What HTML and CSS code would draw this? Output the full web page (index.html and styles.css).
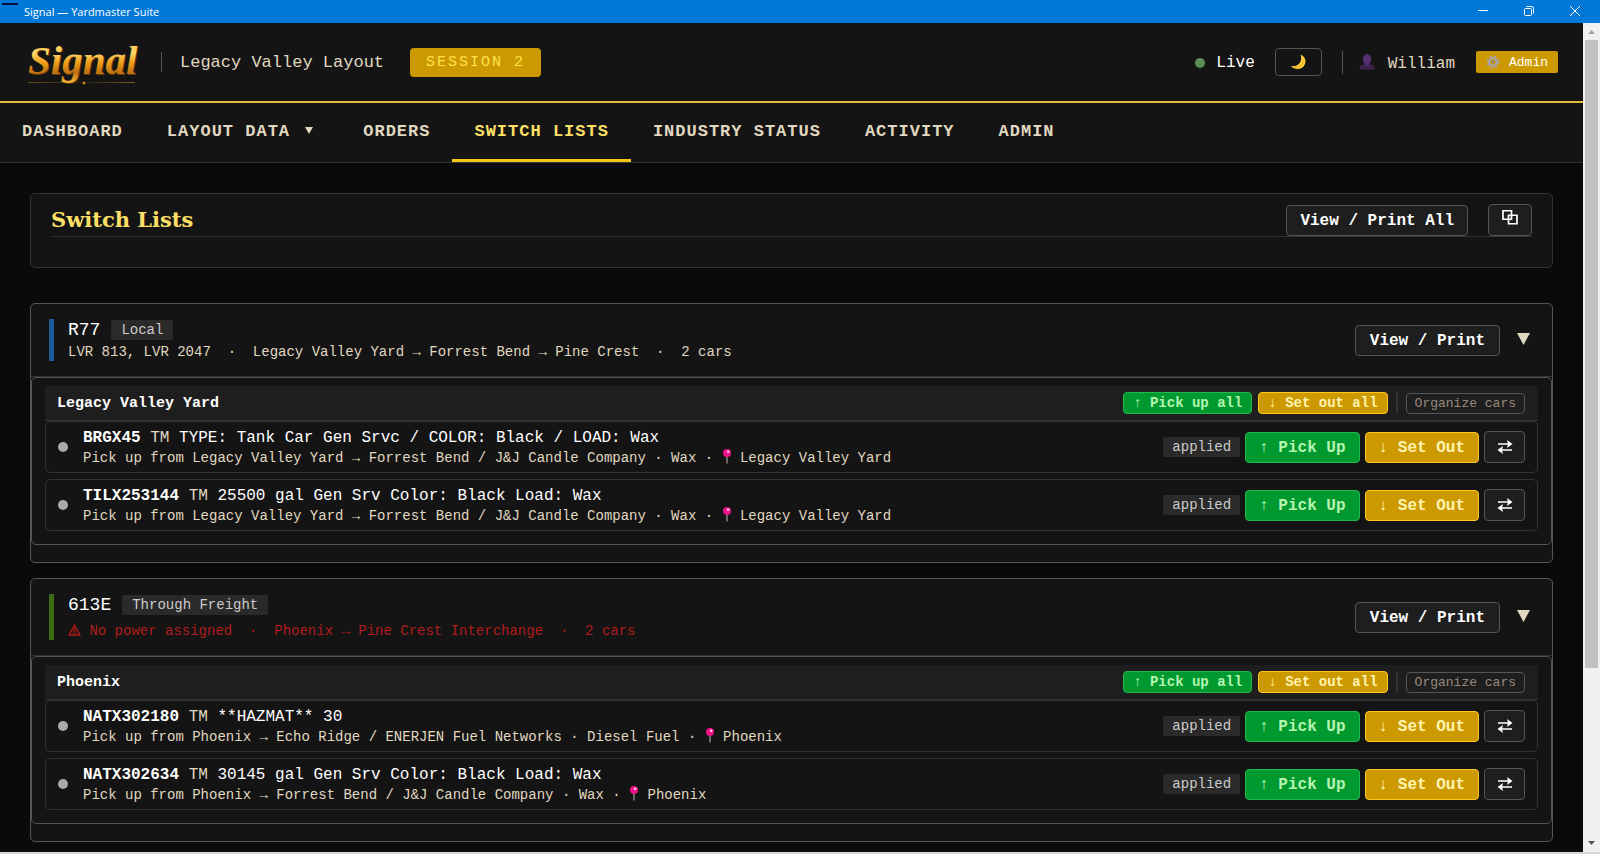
FILE: index.html
```html
<!DOCTYPE html>
<html lang="en">
<head>
<meta charset="utf-8">
<meta name="viewport" content="width=device-width, initial-scale=1">
<title>Signal — Yardmaster Suite</title>
<link rel="stylesheet" href="styles.css">
</head>
<body>
<svg class="sprite" aria-hidden="true">
  <symbol id="pin" viewBox="0 0 10 15">
    <path d="M4.500 6.500h1V14.500h-1z" fill="#b9b9b9"/>
    <circle cx="5" cy="4" r="4" fill="#ee1289"/>
    <circle cx="6.200" cy="2.800" r="1.300" fill="#ffd0e8"/>
  </symbol>
  <symbol id="swap" viewBox="0 0 16 14">
    <path d="M1 4h12M3 10h12" stroke="currentColor" stroke-width="1.600" fill="none"/>
    <path d="M10 0 15.500 4 10 8l1-4zM6 6 .5 10 6 14l-1-4z" fill="currentColor"/>
  </symbol>
</svg>

<div class="window">
  <div class="titlebar">
    <span class="titlebar-mark"></span>
    <span class="titlebar-name">Signal — Yardmaster Suite</span>
    <div class="titlebar-controls">
      <button type="button" aria-label="Minimize"><svg width="12" height="12" viewBox="0 0 12 12"><path d="M1 5.500h10" stroke="#fff" fill="none"/></svg></button>
      <button type="button" aria-label="Restore"><svg width="12" height="12" viewBox="0 0 12 12"><path d="M1.500 4.500a1 1 0 0 1 1-1h5a1 1 0 0 1 1 1v5a1 1 0 0 1-1 1h-5a1 1 0 0 1-1-1zM3.500 1.500h5a2 2 0 0 1 2 2v5" stroke="#fff" fill="none"/></svg></button>
      <button type="button" aria-label="Close"><svg width="12" height="12" viewBox="0 0 12 12"><path d="M1 1l10 10M11 1L1 11" stroke="#fff" fill="none"/></svg></button>
    </div>
  </div>

  <div class="viewport">
    <div class="page">
      <header class="header">
        <svg class="logo" width="112" height="48" viewBox="0 0 112 48" role="img" aria-label="Signal">
          <defs>
            <linearGradient id="gold" x1="0" y1="0" x2="0" y2="1">
              <stop offset="0.100" stop-color="#ffc94a"/>
              <stop offset="0.350" stop-color="#ffd56a"/>
              <stop offset="0.550" stop-color="#f0a01c"/>
              <stop offset="0.780" stop-color="#c07010"/>
              <stop offset="1" stop-color="#f7b93a"/>
            </linearGradient>
            <linearGradient id="rule" x1="0" y1="0" x2="1" y2="0">
              <stop offset="0" stop-color="#6e4c1c"/>
              <stop offset="0.450" stop-color="#2c2214"/>
              <stop offset="0.550" stop-color="#2c2214"/>
              <stop offset="1" stop-color="#7e5a24"/>
            </linearGradient>
          </defs>
          <path d="M0 44h107v1H0z" fill="url(#rule)"/>
          <text class="logo-text logo-shade" x="1" y="37">Signal</text>
          <text class="logo-text" x="0" y="36" fill="url(#gold)">Signal</text>
          <circle cx="56" cy="45" r="1.500" fill="#c8861c"/>
        </svg>
        <span class="rule"></span>
        <span class="layout-name">Legacy Valley Layout</span>
        <span class="session">SESSION 2</span>
        <div class="header-right">
          <span class="live"><span class="live-dot"></span>Live</span>
          <button class="theme" type="button" aria-label="Dark theme">
            <svg width="16" height="16" viewBox="0 0 16 16"><path d="M10.500 0.500c4 1.500 6 5.500 4.500 9.500-2 5.500-9.500 7-14.500 2 5 .8 8.500-.8 10-4.500 1-2.500.8-5 0-7z" fill="#ffcf3a"/><path d="M13 6.500c.5 4-3 7-8 7" stroke="#e8a81c" fill="none"/></svg>
          </button>
          <div class="user">
            <svg width="16" height="16" viewBox="0 0 16 16"><path d="M.5 15.500c0-3.500 2-4.500 5.500-5.500h4c3.500 1 5.500 2 5.500 5.500z" fill="#3c2350"/><path d="M6 9h4v3H6z" fill="#492a60"/><ellipse cx="8" cy="5.300" rx="4.200" ry="5.200" fill="#553070"/></svg>
            <span class="user-name">William</span>
            <a class="role" href="#admin">
              <svg width="14" height="14" viewBox="0 0 14 14"><circle cx="7" cy="7" r="5.700" fill="none" stroke="#aaa29c" stroke-width="2" stroke-dasharray="2.240 2.240"/><circle cx="7" cy="7" r="3.800" fill="none" stroke="#aaa29c" stroke-width="2.600"/><circle cx="7" cy="7" r="1.400" fill="#8c8580"/></svg>
              Admin
            </a>
          </div>
        </div>
      </header>

      <nav class="nav">
        <a href="#dashboard">DASHBOARD</a>
        <a href="#layout">LAYOUT DATA <svg class="caret" width="8" height="7" viewBox="0 0 8 7"><path d="M0 0h8L4 7z" fill="currentColor"/></svg></a>
        <a href="#orders">ORDERS</a>
        <a class="active" href="#switch" aria-current="page">SWITCH LISTS</a>
        <a href="#industry">INDUSTRY STATUS</a>
        <a href="#activity">ACTIVITY</a>
        <a href="#admin">ADMIN</a>
      </nav>

      <main class="main">
        <section class="panel">
          <div class="panel-head">
            <h1>Switch Lists</h1>
            <button class="btn" type="button">View / Print All</button>
            <button class="btn btn-icon btn-window" type="button" aria-label="Open in new window">
              <svg width="18" height="16" viewBox="0 0 18 16"><path d="M2 1.750h8.500v8.500H2zM7.500 6.250H16v8.500H7.500z" stroke="currentColor" stroke-width="1.700" fill="none"/></svg>
            </button>
          </div>
        </section>

        <section class="train">
          <div class="train-head">
            <div class="train-info local">
              <div class="train-title">R77 <span class="tag">Local</span></div>
              <div class="train-sub">LVR 813, LVR 2047&nbsp; ·&nbsp; Legacy Valley Yard → Forrest Bend → Pine Crest&nbsp; ·&nbsp; 2 cars</div>
            </div>
            <button class="btn" type="button">View / Print</button>
            <button class="toggle" type="button" aria-label="Collapse R77"><svg width="13" height="12" viewBox="0 0 13 12"><path d="M0 0h13L6.500 12z" fill="currentColor"/></svg></button>
          </div>
          <div class="cars">
            <div class="stop">
              <h2>Legacy Valley Yard</h2>
              <button class="btn small pick" type="button">↑ Pick up all</button>
              <button class="btn small set" type="button">↓ Set out all</button>
              <span class="stop-rule"></span>
              <button class="btn organize" type="button">Organize cars</button>
            </div>
            <div class="car">
              <span class="dot"></span>
              <div class="car-text">
                <div class="car-title"><b>BRGX45</b> <i>TM</i> TYPE: Tank Car Gen Srvc / COLOR: Black / LOAD: Wax</div>
                <div class="car-sub">Pick up from Legacy Valley Yard → Forrest Bend / J&amp;J Candle Company · Wax · <svg class="pin"><use href="#pin"/></svg> Legacy Valley Yard</div>
              </div>
              <span class="tag">applied</span>
              <button class="btn pick" type="button">↑ Pick Up</button>
              <button class="btn set" type="button">↓ Set Out</button>
              <button class="btn btn-icon" type="button" aria-label="Swap"><svg width="16" height="14"><use href="#swap"/></svg></button>
            </div>
            <div class="car">
              <span class="dot"></span>
              <div class="car-text">
                <div class="car-title"><b>TILX253144</b> <i>TM</i> 25500 gal Gen Srv Color: Black Load: Wax</div>
                <div class="car-sub">Pick up from Legacy Valley Yard → Forrest Bend / J&amp;J Candle Company · Wax · <svg class="pin"><use href="#pin"/></svg> Legacy Valley Yard</div>
              </div>
              <span class="tag">applied</span>
              <button class="btn pick" type="button">↑ Pick Up</button>
              <button class="btn set" type="button">↓ Set Out</button>
              <button class="btn btn-icon" type="button" aria-label="Swap"><svg width="16" height="14"><use href="#swap"/></svg></button>
            </div>
          </div>
        </section>

        <section class="train">
          <div class="train-head">
            <div class="train-info through">
              <div class="train-title">613E <span class="tag">Through Freight</span></div>
              <div class="train-sub warning"><svg width="13" height="12" viewBox="0 0 13 12"><path d="M6.500 1 12.200 11.200H.8z" fill="#3a1414" stroke="currentColor" stroke-width="1.200" stroke-linejoin="round"/><path d="M6.500 4v4M6.500 9v1.300" stroke="currentColor" stroke-width="1.400"/></svg> No power assigned&nbsp; ·&nbsp; Phoenix → Pine Crest Interchange&nbsp; ·&nbsp; 2 cars</div>
            </div>
            <button class="btn" type="button">View / Print</button>
            <button class="toggle" type="button" aria-label="Collapse 613E"><svg width="13" height="12" viewBox="0 0 13 12"><path d="M0 0h13L6.500 12z" fill="currentColor"/></svg></button>
          </div>
          <div class="cars">
            <div class="stop">
              <h2>Phoenix</h2>
              <button class="btn small pick" type="button">↑ Pick up all</button>
              <button class="btn small set" type="button">↓ Set out all</button>
              <span class="stop-rule"></span>
              <button class="btn organize" type="button">Organize cars</button>
            </div>
            <div class="car">
              <span class="dot"></span>
              <div class="car-text">
                <div class="car-title"><b>NATX302180</b> <i>TM</i> **HAZMAT** 30</div>
                <div class="car-sub">Pick up from Phoenix → Echo Ridge / ENERJEN Fuel Networks · Diesel Fuel · <svg class="pin"><use href="#pin"/></svg> Phoenix</div>
              </div>
              <span class="tag">applied</span>
              <button class="btn pick" type="button">↑ Pick Up</button>
              <button class="btn set" type="button">↓ Set Out</button>
              <button class="btn btn-icon" type="button" aria-label="Swap"><svg width="16" height="14"><use href="#swap"/></svg></button>
            </div>
            <div class="car">
              <span class="dot"></span>
              <div class="car-text">
                <div class="car-title"><b>NATX302634</b> <i>TM</i> 30145 gal Gen Srv Color: Black Load: Wax</div>
                <div class="car-sub">Pick up from Phoenix → Forrest Bend / J&amp;J Candle Company · Wax · <svg class="pin"><use href="#pin"/></svg> Phoenix</div>
              </div>
              <span class="tag">applied</span>
              <button class="btn pick" type="button">↑ Pick Up</button>
              <button class="btn set" type="button">↓ Set Out</button>
              <button class="btn btn-icon" type="button" aria-label="Swap"><svg width="16" height="14"><use href="#swap"/></svg></button>
            </div>
          </div>
        </section>
      </main>
    </div>

    <div class="scrollbar" aria-hidden="true">
      <svg width="17" height="17" viewBox="0 0 17 17"><path d="M5 11l3.500-4 3.500 4z" fill="#a3a3a3"/></svg>
      <div class="track"><div class="thumb"></div></div>
      <svg width="17" height="17" viewBox="0 0 17 17"><path d="M5 6l3.500 4L12 6z" fill="#505050"/></svg>
    </div>
  </div>
</div>
</body>
</html>
```

FILE: styles.css
```css
* {
  box-sizing: border-box;
}

body {
  margin: 0;
  background: #0a0a0a;
  color: #fff;
  font-family: "Liberation Mono", monospace;
  font-size: 16px;
}

button {
  font: inherit;
  color: inherit;
  margin: 0;
  padding: 0;
  border: 0;
  background: none;
}

a {
  color: inherit;
  text-decoration: none;
}

svg {
  flex: none;
}

.sprite {
  display: none;
}

.window {
  display: flex;
  flex-direction: column;
  height: 100vh;
  border-bottom: 2px solid #d8d8d8;
}

/* Window title bar */
.titlebar {
  flex: none;
  display: flex;
  align-items: center;
  height: 23px;
  padding-left: 2px;
  background: #0078d7;
  font-family: "Open Sans", sans-serif;
  font-size: 11px;
}

.titlebar-mark {
  align-self: flex-start;
  width: 16px;
  height: 2px;
  margin: 3px 6px 0 0;
  background: #06133c;
}

.titlebar-controls {
  display: flex;
  gap: 34px;
  margin-left: auto;
  padding: 0 19px 2px 0;
}

.titlebar-controls svg {
  display: block;
}

.viewport {
  flex: 1;
  display: flex;
  min-height: 0;
}

.page {
  flex: 1;
  min-width: 0;
  overflow: hidden;
}

/* Application header */
.header {
  display: flex;
  align-items: center;
  height: 80px;
  padding: 0 25px 0 28px;
  background: #141414;
  border-bottom: 2px solid #e5bd3c;
}

.logo {
  margin-right: 21px;
  overflow: visible;
}

.logo-text {
  font-family: "Liberation Serif", serif;
  font-size: 41px;
  font-style: italic;
  font-weight: bold;
}

.logo-shade {
  fill: #5e390a;
}

.rule {
  width: 1px;
  height: 20px;
  margin-right: 18px;
  background: #555;
}

.layout-name {
  margin-right: 26px;
  color: #e0d8c0;
  font-size: 17px;
}

.session {
  padding: 0 16px;
  border-radius: 4px;
  background: #cc9900;
  color: #ffe14d;
  font-size: 15px;
  letter-spacing: 2px;
  line-height: 29px;
}

.header-right {
  display: flex;
  align-items: center;
  gap: 20px;
  margin-left: auto;
}

.live {
  display: flex;
  align-items: center;
  gap: 11px;
  padding-top: 1px;
}

.live-dot {
  width: 10px;
  height: 10px;
  border-radius: 50%;
  background: #5a8f5a;
}

.theme {
  display: flex;
  align-items: center;
  justify-content: center;
  width: 47px;
  height: 28px;
  border: 1px solid #555;
  border-radius: 4px;
}

.user {
  display: flex;
  align-items: center;
  height: 23px;
  padding-left: 16px;
  border-left: 1px solid #555;
}

.user-name {
  margin: 4px 21px 0 13px;
  color: #e0d8c0;
}

.role {
  display: flex;
  align-items: center;
  gap: 9px;
  height: 22px;
  padding: 0 10px;
  border-radius: 2px;
  background: #cc9900;
  font-size: 13px;
}

/* Main navigation */
.nav {
  display: flex;
  background: #141414;
  border-bottom: 1px solid #333;
  color: #e0d8c0;
  font-size: 17px;
  font-weight: bold;
  letter-spacing: 1px;
  line-height: 20px;
}

.nav a {
  padding: 19px 22px 17px;
  border-bottom: 3px solid transparent;
}

.nav .active {
  border-bottom-color: #f5c518;
  color: #ffe066;
}

.caret {
  margin: 0 6px 2px 4px;
}

.main {
  padding: 30px;
}

/* Buttons and tags */
.btn {
  height: 31px;
  padding: 1px 13px 0;
  border: 1px solid #555;
  border-radius: 4px;
  background: #1e1e1e;
  font-weight: bold;
  white-space: nowrap;
}

.btn-icon {
  display: flex;
  align-items: center;
  justify-content: center;
  width: 41px;
  height: 32px;
  padding: 0;
}

.btn-window {
  width: 44px;
  padding-bottom: 6px;
}

.small {
  height: 22px;
  padding: 0 9px;
  font-size: 14px;
}

.pick {
  border-color: #22b84c;
  background: #009930;
  color: #b4f5b0;
}

.set {
  border-color: #ffc81f;
  background: #cc9900;
  color: #fff3b0;
}

.organize {
  height: 21px;
  padding: 0 8px;
  color: #9a897c;
  font-size: 13px;
  font-weight: normal;
}

.tag {
  padding: 0 9px;
  border-radius: 2px;
  background: #2a2a2a;
  color: #ccc;
  font-size: 14px;
  line-height: 20px;
}

/* Page title panel */
.panel {
  margin-bottom: 35px;
  padding: 10px 20px 30px;
  border: 1px solid #333;
  border-radius: 5px;
  background: #141414;
}

.panel-head {
  display: flex;
  align-items: center;
  gap: 20px;
  border-bottom: 1px solid #333;
}

h1 {
  flex: 1;
  margin: 0;
  color: #ffe066;
  font-family: "DejaVu Serif", serif;
  font-size: 21px;
  line-height: 32px;
}

/* Train cards */
.train {
  margin-bottom: 15px;
  padding-bottom: 17px;
  border: 1px solid #555;
  border-radius: 5px;
  background: #141414;
}

.train-head {
  display: flex;
  align-items: center;
  padding: 15px 18px;
  border-bottom: 1px solid #333;
}

.train-head .btn {
  padding: 1px 14px 0;
}

.train-info {
  flex: 1;
  padding-left: 14px;
  border-left: 5px solid;
}

.local {
  border-color: #1c5c9c;
}

.through {
  border-color: #3c6c14;
}

.train-title {
  display: flex;
  align-items: center;
  gap: 11px;
  height: 22px;
  font-size: 18px;
}

.train-title .tag {
  padding: 0 10px;
}

.train-sub {
  padding-top: 2px;
  color: #e0d8c0;
  font-size: 14px;
  line-height: 18px;
}

.warning {
  padding-top: 6px;
  color: #b01c1c;
}

.warning svg {
  vertical-align: -1px;
}

.toggle {
  margin-left: 15px;
  padding: 2px 4px 0 2px;
  color: #e0d8c0;
}

.cars {
  display: flex;
  flex-direction: column;
  padding: 8px 13px 13px;
  border: 1px solid #555;
  border-radius: 5px;
}

.stop {
  display: flex;
  align-items: center;
  gap: 6px;
  height: 35px;
  padding: 0 13px 0 12px;
  border-bottom: 1px solid #333;
  background: #1e1e1e;
}

h2 {
  flex: 1;
  margin: 0;
  font-size: 15px;
}

.stop-rule {
  width: 2px;
  height: 20px;
  margin: 0 2px;
  background: #333;
}

.car {
  display: flex;
  align-items: center;
  gap: 5px;
  padding: 4px 12px;
  border: 1px solid #333;
  border-radius: 5px;
}

.car + .car {
  margin-top: 6px;
}

.dot {
  width: 10px;
  height: 10px;
  margin-right: 10px;
  border-radius: 50%;
  background: #aaa;
}

.car-text {
  flex: 1;
  padding-top: 2px;
  line-height: 20px;
}

.car-title i {
  color: #e0d8c0;
  font-style: normal;
}

.car-sub {
  color: #e0d8c0;
  font-size: 14px;
}

.pin {
  width: 10px;
  height: 15px;
  vertical-align: -2px;
}

/* Scrollbar */
.scrollbar {
  flex: none;
  display: flex;
  flex-direction: column;
  width: 17px;
  background: #f0f0f0;
}

.track {
  flex: 1;
  padding: 0 2px;
}

.thumb {
  height: 79%;
  background: #c1c1c1;
}
```
